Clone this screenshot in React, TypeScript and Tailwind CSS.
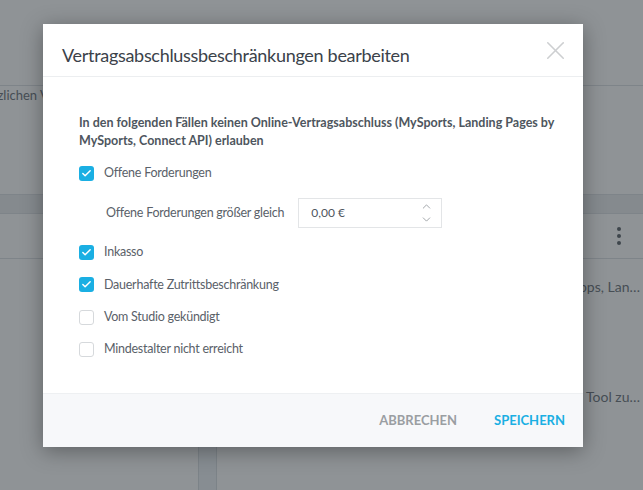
import { Check, ChevronUp, ChevronDown, X } from "lucide-react";

const font = { fontFamily: "Lato, 'Open Sans', sans-serif" };

type Item = { label: string; checked: boolean };

const items: Item[] = [
  { label: "Inkasso", checked: true },
  { label: "Dauerhafte Zutrittsbeschränkung", checked: true },
  { label: "Vom Studio gekündigt", checked: false },
  { label: "Mindestalter nicht erreicht", checked: false },
];

function Box({ checked }: { checked: boolean }) {
  return checked ? (
    <span className="flex h-[15px] w-[15px] shrink-0 items-center justify-center rounded-[3px] bg-[#1aafe3]">
      <Check size={11} strokeWidth={3.2} className="text-white" />
    </span>
  ) : (
    <span className="h-[15px] w-[15px] shrink-0 rounded-[3px] border border-[#d6d9dc] bg-white" />
  );
}

function Row({ label, checked }: Item) {
  return (
    <label className="flex h-[32.4px] items-center gap-[10px]">
      <Box checked={checked} />
      <span className="text-[12.5px] tracking-[-0.25px] text-[#5a6169]">{label}</span>
    </label>
  );
}

export default function App() {
  return (
    <div className="relative h-[490px] w-[643px] overflow-hidden bg-white" style={font}>
      {/* page behind the dialog */}
      <div className="h-[86px] border-b border-[#dde1e4]" />
      <div className="h-[108px] text-[13px] text-[#6e757c]">
        <div className="-ml-[34px] whitespace-nowrap">Zusätzlichen Vertragsoptionen</div>
      </div>
      <div className="h-[20px] border-y border-[#dde1e4] bg-[#eaedef]" />
      <div className="flex h-[45px] items-center justify-end border-b border-[#dde1e4] pr-[22px]">
        <div className="flex flex-col gap-[3px]">
          <span className="h-[4px] w-[4px] rounded-full bg-[#5d646b]" />
          <span className="h-[4px] w-[4px] rounded-full bg-[#5d646b]" />
          <span className="h-[4px] w-[4px] rounded-full bg-[#5d646b]" />
        </div>
      </div>
      <div className="flex h-[232px]">
        <div className="w-[198px]" />
        <div className="w-[19px] border-x border-[#d9dee3] bg-[#eff3f7]" />
        <div className="flex flex-1 flex-col items-end pr-[3px] text-[14px] text-[#6e757c]">
          <div className="mt-[17px] whitespace-nowrap">Apps, Lan…</div>
          <div className="mt-[89px] whitespace-nowrap">Tool zu…</div>
        </div>
      </div>

      {/* overlay */}
      <div className="absolute inset-0 bg-[#20272e]/50" />

      {/* dialog */}
      <div className="absolute left-[43px] top-[24px] flex h-[423px] w-[540px] flex-col bg-white shadow-[0_4px_20px_rgba(0,0,0,0.35)]">
        <div className="flex h-[53px] shrink-0 items-center justify-between border-b border-[#eceef0] pl-[19px] pr-[12px]">
          <h2 className="mt-[10px] text-[18px] tracking-[-0.3px] text-[#3b424a]">
            Vertragsabschlussbeschränkungen bearbeiten
          </h2>
          <X size={31} strokeWidth={1.2} className="text-[#cdcfd1]" />
        </div>

        <div className="flex-1 pl-[36px] pr-[18px] pt-[37px]">
          <p className="text-[12.5px] font-bold leading-[18px] text-[#4e565e]">
            In den folgenden Fällen keinen Online-Vertragsabschluss (MySports, Landing Pages by MySports, Connect API) erlauben
          </p>
          <div className="mt-[7px]">
            <Row label="Offene Forderungen" checked />
            <div className="flex h-[47px] items-center gap-[14px] pl-[27px]">
              <span className="text-[12.5px] tracking-[-0.25px] text-[#5a6169]">Offene Forderungen größer gleich</span>
              <div className="flex h-[30px] w-[144px] items-center justify-between border border-[#e3e5e7] pl-[12px] pr-[8px]">
                <span className="text-[12px] text-[#4e565e]">0,00 €</span>
                <div className="flex flex-col text-[#858b90]">
                  <ChevronUp size={13} strokeWidth={1.4} />
                  <ChevronDown size={13} strokeWidth={1.4} />
                </div>
              </div>
            </div>
            {items.map((it) => (
              <Row key={it.label} {...it} />
            ))}
          </div>
        </div>

        <div className="flex h-[54px] shrink-0 items-center justify-end gap-[37px] border-t border-[#eef0f2] bg-[#f7f8fa] pr-[18px]">
          <button className="text-[13px] font-bold text-[#9a9ea2]">ABBRECHEN</button>
          <button className="text-[13px] font-bold text-[#1aafe3]">SPEICHERN</button>
        </div>
      </div>
    </div>
  );
}
